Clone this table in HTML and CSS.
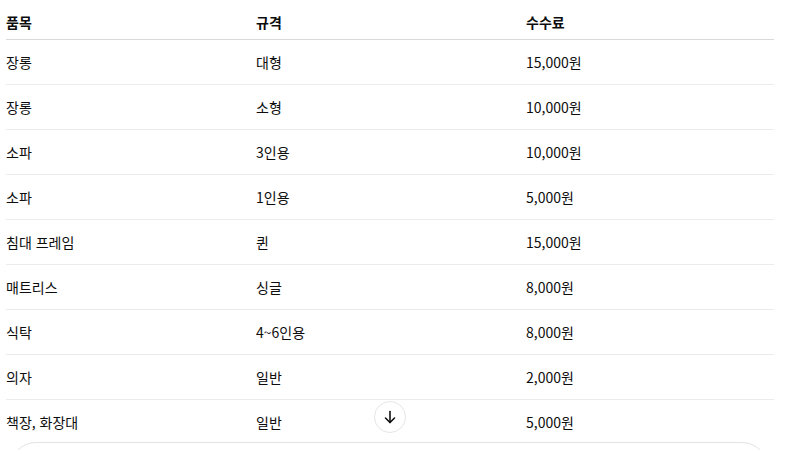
FILE: index.html
```html
<!DOCTYPE html>
<html lang="ko">
<head>
    <meta charset="UTF-8">
    <meta name="viewport" content="width=device-width, initial-scale=1.0">
    <title>대형 폐기물 수수료</title>
    <link rel="stylesheet" href="styles.css">
</head>
<body>
    <div class="wrap">
        <table class="fee-table">
            <thead>
                <tr>
                    <th class="col-item">품목</th>
                    <th class="col-size">규격</th>
                    <th class="col-fee">수수료</th>
                </tr>
            </thead>
            <tbody>
                <tr><td>장롱</td><td>대형</td><td>15,000원</td></tr>
                <tr><td>장롱</td><td>소형</td><td>10,000원</td></tr>
                <tr><td>소파</td><td>3인용</td><td>10,000원</td></tr>
                <tr><td>소파</td><td>1인용</td><td>5,000원</td></tr>
                <tr><td>침대 프레임</td><td>퀸</td><td>15,000원</td></tr>
                <tr><td>매트리스</td><td>싱글</td><td>8,000원</td></tr>
                <tr><td>식탁</td><td>4~6인용</td><td>8,000원</td></tr>
                <tr><td>의자</td><td>일반</td><td>2,000원</td></tr>
                <tr><td>책장, 화장대</td><td>일반</td><td>5,000원</td></tr>
            </tbody>
        </table>

        <button class="scroll-down" type="button" aria-label="아래로 스크롤">
            <svg width="16" height="16" viewBox="0 0 16 16" fill="none" stroke="#111" stroke-width="1.6" stroke-linecap="round" stroke-linejoin="round">
                <path d="M8 2.5v11"/>
                <path d="M3.5 9l4.5 4.5L12.5 9"/>
            </svg>
        </button>

        <div class="composer"></div>
    </div>
</body>
</html>
```

FILE: styles.css
```css
* {
    margin: 0;
    padding: 0;
    box-sizing: border-box;
}
html, body {
    height: 100%;
    overflow: hidden;
}
body {
    font-family: 'Noto Sans CJK KR', 'Noto Sans', sans-serif;
    background-color: #fff;
    color: #0d0d0d;
    font-size: 14px;
}
.wrap {
    position: relative;
    padding: 0 23px 0 6px;
}
.fee-table {
    width: 768px;
    border-collapse: collapse;
    table-layout: fixed;
}
.fee-table th,
.fee-table td {
    text-align: left;
    line-height: 21px;
    padding-right: 8px;
}
.fee-table th {
    font-weight: 700;
    padding-top: 12px;
    padding-bottom: 6px;
    border-bottom: 1px solid #d9d9d9;
}
.fee-table td {
    font-weight: 400;
    padding-top: 12px;
    padding-bottom: 11px;
    border-bottom: 1px solid #ececec;
    height: 45px;
}
.fee-table tbody tr:last-child td {
    border-bottom: none;
}
.col-item {
    width: 250px;
}
.col-size {
    width: 270px;
}
.scroll-down {
    position: absolute;
    left: 374px;
    top: 401px;
    width: 32px;
    height: 32px;
    border-radius: 50%;
    border: 1px solid #e6e6e6;
    background-color: #fff;
    display: flex;
    align-items: center;
    justify-content: center;
    cursor: pointer;
}
.composer {
    margin: -3px 6px 0 4px;
    height: 60px;
    border: 1px solid #e3e3e3;
    border-radius: 26px;
    background-color: #fff;
}
```
